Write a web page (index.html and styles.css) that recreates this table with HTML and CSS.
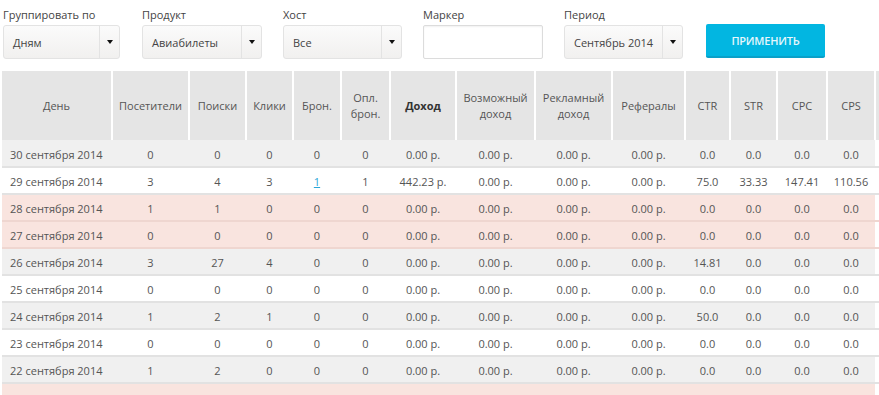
FILE: index.html
```html
<!DOCTYPE html>
<html lang="ru">
<head>
<meta charset="utf-8">
<link rel="stylesheet" href="styles.css">
</head>
<body>
<div class="filters">
  <div class="group g1">
    <div class="label">Группировать по</div>
    <div class="select w117"><span class="val">Дням</span><span class="caret-box"><span class="caret"></span></span></div>
  </div>
  <div class="group g2">
    <div class="label">Продукт</div>
    <div class="select w120"><span class="val">Авиабилеты</span><span class="caret-box"><span class="caret"></span></span></div>
  </div>
  <div class="group g3">
    <div class="label">Хост</div>
    <div class="select w119"><span class="val">Все</span><span class="caret-box"><span class="caret"></span></span></div>
  </div>
  <div class="group g4">
    <div class="label">Маркер</div>
    <div class="input w120"></div>
  </div>
  <div class="group g5">
    <div class="label">Период</div>
    <div class="select w119"><span class="val">Сентябрь 2014</span><span class="caret-box"><span class="caret"></span></span></div>
  </div>
  <div class="group g6">
    <div class="label">&nbsp;</div>
    <div class="btn">ПРИМЕНИТЬ</div>
  </div>
</div>

<table class="stats">
  <colgroup>
    <col class="c110"><col class="c77"><col class="c57"><col class="c47"><col class="c48"><col class="c49"><col class="c66"><col class="c79"><col class="c77"><col class="c73"><col class="c45"><col class="c47"><col class="c50"><col class="c48"><col class="c60">
  </colgroup>
  <thead>
    <tr>
      <th>День</th><th>Посетители</th><th>Поиски</th><th>Клики</th><th>Брон.</th><th>Опл.<br>брон.</th><th class="bold">Доход</th><th>Возможный<br>доход</th><th>Рекламный<br>доход</th><th>Рефералы</th><th>CTR</th><th>STR</th><th>CPC</th><th>CPS</th><th class="more"></th>
    </tr>
  </thead>
  <tbody>
    <tr class="grey"><td class="day">30 сентября 2014</td><td>0</td><td>0</td><td>0</td><td>0</td><td>0</td><td>0.00 р.</td><td>0.00 р.</td><td>0.00 р.</td><td>0.00 р.</td><td>0.0</td><td>0.0</td><td>0.0</td><td>0.0</td><td class="more"></td></tr>
    <tr class="white"><td class="day">29 сентября 2014</td><td>3</td><td>4</td><td>3</td><td><a class="lnk">1</a></td><td>1</td><td>442.23 р.</td><td>0.00 р.</td><td>0.00 р.</td><td>0.00 р.</td><td>75.0</td><td>33.33</td><td>147.41</td><td>110.56</td><td class="more"></td></tr>
    <tr class="pink"><td class="day">28 сентября 2014</td><td>1</td><td>1</td><td>0</td><td>0</td><td>0</td><td>0.00 р.</td><td>0.00 р.</td><td>0.00 р.</td><td>0.00 р.</td><td>0.0</td><td>0.0</td><td>0.0</td><td>0.0</td><td class="more"></td></tr>
    <tr class="pink"><td class="day">27 сентября 2014</td><td>0</td><td>0</td><td>0</td><td>0</td><td>0</td><td>0.00 р.</td><td>0.00 р.</td><td>0.00 р.</td><td>0.00 р.</td><td>0.0</td><td>0.0</td><td>0.0</td><td>0.0</td><td class="more"></td></tr>
    <tr class="grey"><td class="day">26 сентября 2014</td><td>3</td><td>27</td><td>4</td><td>0</td><td>0</td><td>0.00 р.</td><td>0.00 р.</td><td>0.00 р.</td><td>0.00 р.</td><td>14.81</td><td>0.0</td><td>0.0</td><td>0.0</td><td class="more"></td></tr>
    <tr class="white"><td class="day">25 сентября 2014</td><td>0</td><td>0</td><td>0</td><td>0</td><td>0</td><td>0.00 р.</td><td>0.00 р.</td><td>0.00 р.</td><td>0.00 р.</td><td>0.0</td><td>0.0</td><td>0.0</td><td>0.0</td><td class="more"></td></tr>
    <tr class="grey"><td class="day">24 сентября 2014</td><td>1</td><td>2</td><td>1</td><td>0</td><td>0</td><td>0.00 р.</td><td>0.00 р.</td><td>0.00 р.</td><td>0.00 р.</td><td>50.0</td><td>0.0</td><td>0.0</td><td>0.0</td><td class="more"></td></tr>
    <tr class="white"><td class="day">23 сентября 2014</td><td>0</td><td>0</td><td>0</td><td>0</td><td>0</td><td>0.00 р.</td><td>0.00 р.</td><td>0.00 р.</td><td>0.00 р.</td><td>0.0</td><td>0.0</td><td>0.0</td><td>0.0</td><td class="more"></td></tr>
    <tr class="grey"><td class="day">22 сентября 2014</td><td>1</td><td>2</td><td>0</td><td>0</td><td>0</td><td>0.00 р.</td><td>0.00 р.</td><td>0.00 р.</td><td>0.00 р.</td><td>0.0</td><td>0.0</td><td>0.0</td><td>0.0</td><td class="more"></td></tr>
    <tr class="pink last"><td class="day"></td><td></td><td></td><td></td><td></td><td></td><td></td><td></td><td></td><td></td><td></td><td></td><td></td><td></td><td class="more"></td></tr>
  </tbody>
</table>
</body>
</html>
```

FILE: styles.css
```css
html, body {
  margin: 0;
  padding: 0;
  background: #fff;
  overflow: hidden;
}
body {
  width: 879px;
  height: 395px;
  font-family: "Open Sans", "Noto Sans", "Liberation Sans", sans-serif;
  font-size: 11px;
  color: #555;
}
.filters {
  display: flex;
  padding: 7px 0 0 3px;
  height: 64px;
  box-sizing: border-box;
}
.group { flex: none; }
.g1 { width: 139px; }
.g2 { width: 141px; }
.g3 { width: 140px; }
.g4 { width: 141px; }
.g5 { width: 142px; }
.g6 { width: 120px; }
.label {
  font-size: 11px;
  line-height: 16px;
  color: #444;
  margin-bottom: 2px;
  white-space: nowrap;
}
.w117 { width: 117px; }
.w119 { width: 119px; }
.w120 { width: 120px; }
.select {
  height: 34px;
  box-sizing: border-box;
  border: 1px solid #e3e3e3;
  border-radius: 3px;
  background: linear-gradient(#fbfbfb, #f1f0ef);
  display: flex;
  align-items: stretch;
}
.select .val {
  flex: 1;
  display: flex;
  align-items: center;
  padding-left: 9px;
  font-size: 11px;
  color: #444;
  white-space: nowrap;
}
.caret-box {
  width: 19px;
  border-left: 1px solid #e3e3e3;
  display: flex;
  align-items: center;
  justify-content: center;
}
.caret {
  width: 0;
  height: 0;
  border-left: 3.5px solid transparent;
  border-right: 3.5px solid transparent;
  border-top: 4px solid #111;
}
.input {
  height: 34px;
  box-sizing: border-box;
  border: 1px solid #dcdcdc;
  border-radius: 2px;
  background: #fff;
  box-shadow: inset 0 1px 2px rgba(0,0,0,0.06);
}
.btn {
  width: 119px;
  height: 34px;
  box-sizing: border-box;
  margin-top: -1px;
  background: #02b6e1;
  border-bottom: 2px solid #0aa0c8;
  border-radius: 2px;
  color: #e6f7fc;
  font-size: 11px;
  font-weight: 600;
  display: flex;
  align-items: center;
  justify-content: center;
  letter-spacing: -0.2px;
}

.stats {
  margin-left: 2px;
  margin-top: 7px;
  border-collapse: collapse;
  table-layout: fixed;
  width: 933px;
}
.c110 { width: 110px; }
.c77 { width: 77px; }
.c57 { width: 57px; }
.c47 { width: 47px; }
.c48 { width: 48px; }
.c49 { width: 49px; }
.c66 { width: 66px; }
.c79 { width: 79px; }
.c73 { width: 73px; }
.c45 { width: 45px; }
.c50 { width: 50px; }
.c60 { width: 60px; }
.stats th {
  height: 69px;
  box-sizing: border-box;
  background: #e5e5e5;
  border-right: 2px solid #fff;
  font-weight: normal;
  color: #555;
  font-size: 11px;
  line-height: 16px;
  padding: 0 2px;
  text-align: center;
  vertical-align: middle;
}
.stats th.bold {
  font-weight: bold;
  color: #333;
}
.stats td {
  height: 27px;
  box-sizing: border-box;
  border-bottom: 2px solid #e2e2e2;
  text-align: center;
  font-size: 11px;
  color: #555;
  padding: 2px 2px 0;
  white-space: nowrap;
  vertical-align: middle;
}
.stats td.day {
  text-align: left;
  padding-left: 8px;
}
.stats td.more { background: #fff; }
.grey td { background: #f0f0f0; }
.white td { background: #fff; }
.pink td { background: #f9e4df; border-bottom-color: #efd6d0; }
.lnk {
  color: #2aa6d8;
  text-decoration: underline;
}
```
